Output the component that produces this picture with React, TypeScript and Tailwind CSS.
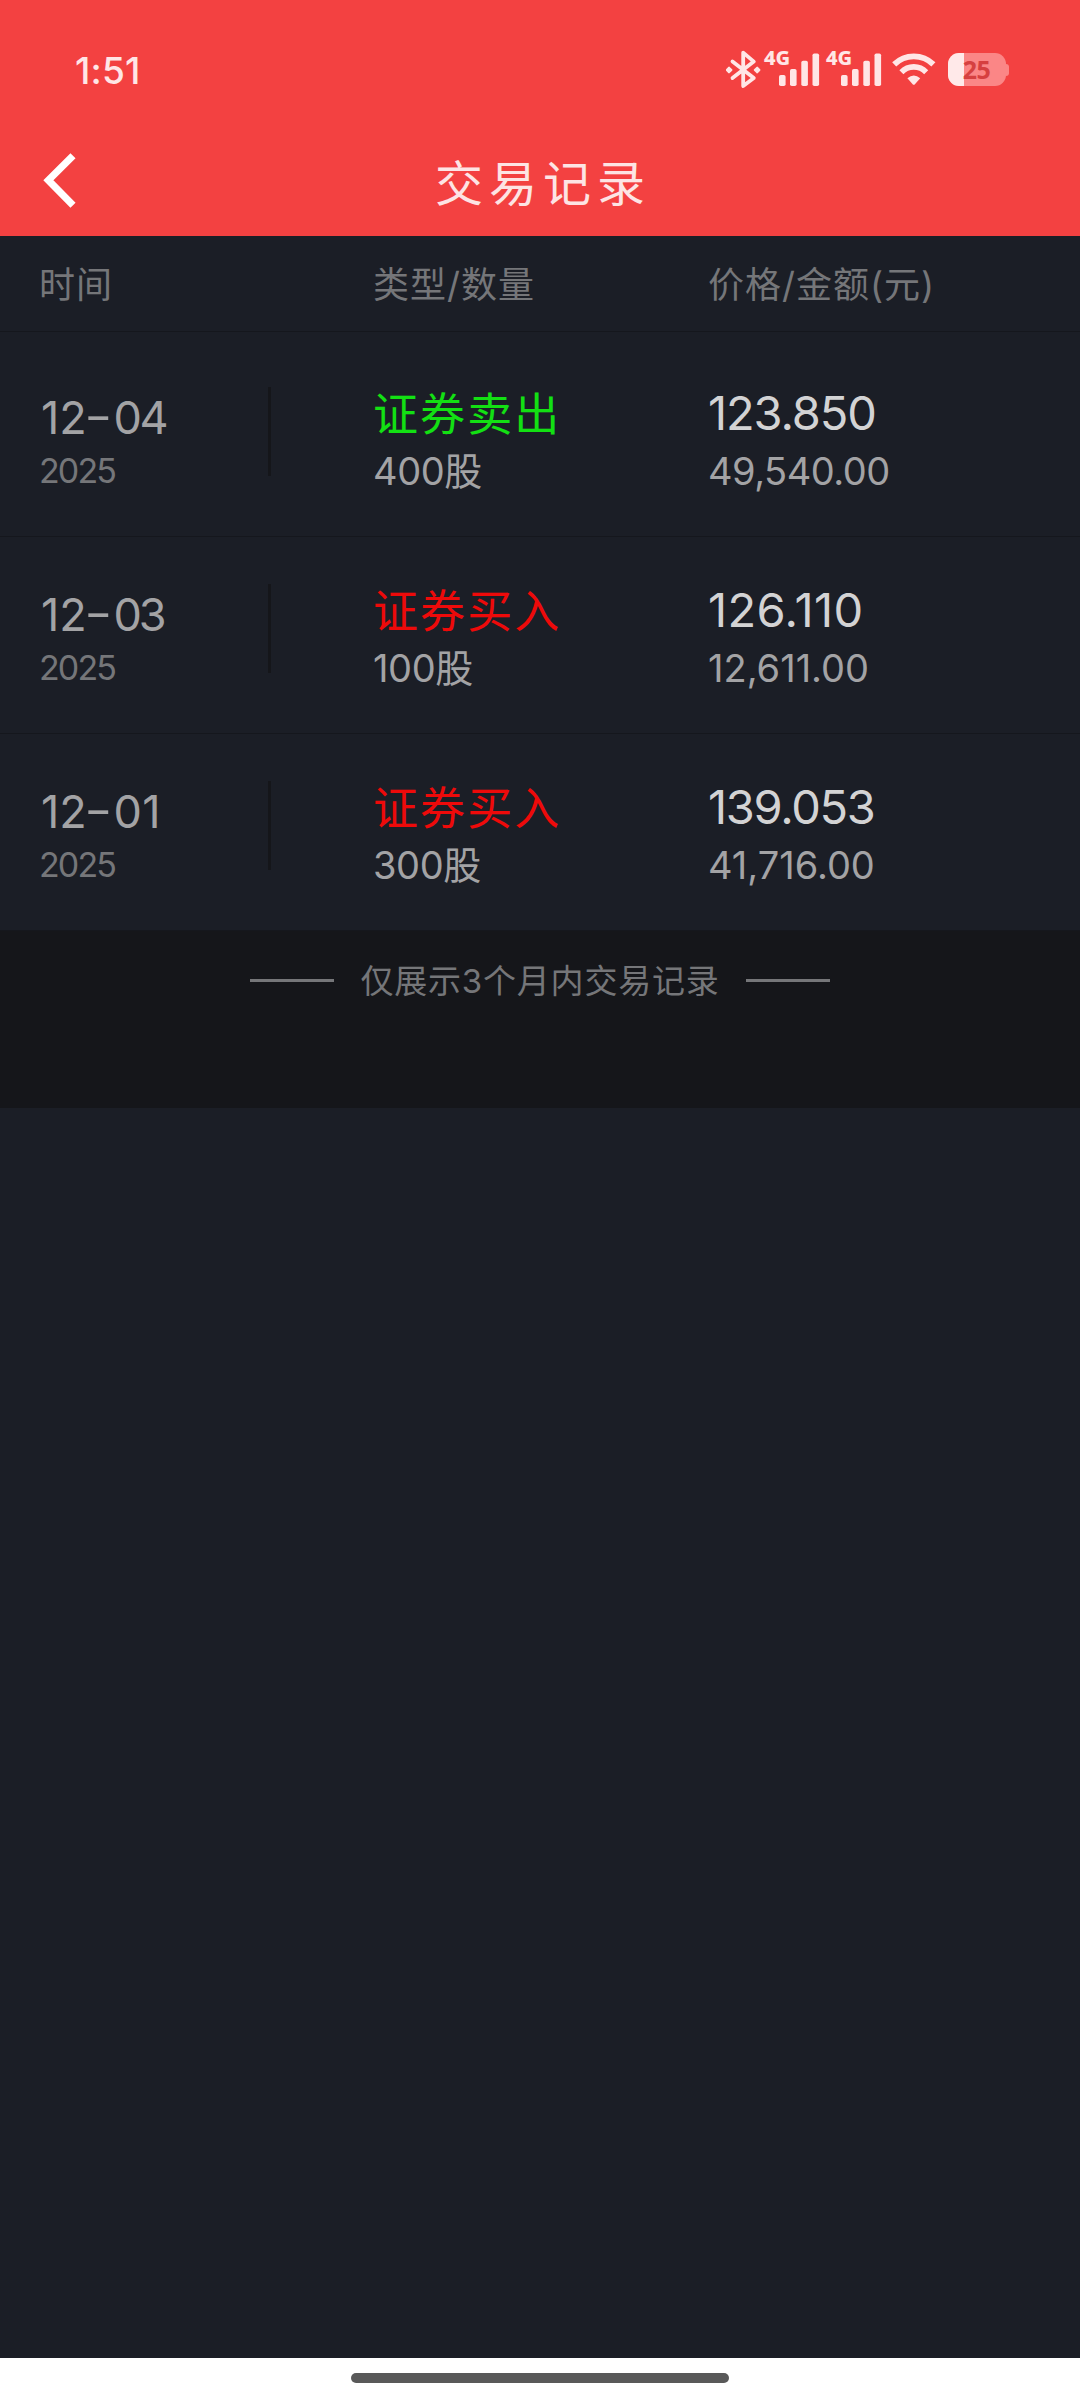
import React from "react";

type Trade = {
  month: string;
  day: string;
  dayClass: string;
  year: string;
  type: string;
  sell?: boolean;
  quantity: string;
  price: string;
  priceClass: string;
  amount: string;
  amountClass: string;
};

const trades: Trade[] = [
  {
    month: "12",
    day: "04",
    dayClass: "tracking-[-2.3px]",
    year: "2025",
    type: "证券卖出",
    sell: true,
    quantity: "400股",
    price: "123.850",
    priceClass: "tracking-[-1.1px]",
    amount: "49,540.00",
    amountClass: "tracking-[-0.5px]",
  },
  {
    month: "12",
    day: "03",
    dayClass: "tracking-[-3px]",
    year: "2025",
    type: "证券买入",
    quantity: "100股",
    price: "126.110",
    priceClass: "tracking-[0.4px]",
    amount: "12,611.00",
    amountClass: "tracking-normal",
  },
  {
    month: "12",
    day: "01",
    dayClass: "tracking-[0.5px]",
    year: "2025",
    type: "证券买入",
    quantity: "300股",
    price: "139.053",
    priceClass: "tracking-[-1.3px]",
    amount: "41,716.00",
    amountClass: "tracking-normal",
  },
];

function BluetoothIcon() {
  return (
    <svg width="36" height="40" viewBox="0 0 36 40" fill="none" className="text-[#ffe6e6]">
      <path
        d="M6.5 11.5 L27.8 28 L17.2 36 V2.6 L27.8 11.6 L6.5 28"
        stroke="currentColor"
        strokeWidth="3.8"
        strokeLinejoin="round"
        strokeLinecap="round"
      />
      <path
        d="M3 17.6 L5.4 20 L3 22.4 L0.8 20 Z M31.2 17.6 L33.4 20 L31.2 22.4 L28.8 20 Z"
        fill="currentColor"
        stroke="currentColor"
        strokeWidth="2"
        strokeLinejoin="round"
      />
    </svg>
  );
}

function Signal() {
  return (
    <div className="relative h-[40px] w-[55px]">
      <span className="absolute left-[-1px] top-[-1px] font-['Noto_Sans',sans-serif] text-[20px] font-extrabold leading-[18px] text-[#ffe6e6]">
        4G
      </span>
      <svg width="55" height="40" viewBox="0 0 55 40" fill="#ffe6e6" className="absolute left-0 top-0">
        <rect x="14" y="25" width="6.6" height="11" rx="1.8" />
        <rect x="25" y="19" width="6.6" height="17" rx="1.8" />
        <rect x="36.3" y="10.8" width="6.6" height="25.2" rx="1.8" />
        <rect x="47.5" y="3.5" width="6.6" height="32.5" rx="1.8" />
      </svg>
    </div>
  );
}

function WifiIcon() {
  return (
    <svg width="44" height="40" viewBox="0 0 44 40" fill="none">
      <path d="M2.2 14.4 A28 28 0 0 1 41.4 14.4" stroke="#ffe6e6" strokeWidth="5.8" />
      <path d="M9.4 22.2 A17.2 17.2 0 0 1 34.2 22.2" stroke="#ffe6e6" strokeWidth="5.6" />
      <path d="M15.4 28.2 Q21.8 22.8 28.2 28.2 L22.7 34.4 Q21.8 35.3 20.9 34.4 Z" fill="#ffe6e6" />
    </svg>
  );
}

function Battery() {
  return (
    <div className="flex items-center">
      <div className="relative flex h-[33px] w-[58px] items-center justify-center overflow-hidden rounded-[11px] bg-[#fb8686]">
        <div className="absolute left-0 top-0 h-full w-[16px] bg-[#ffe9e9]" />
        <span className="relative mr-px font-['Noto_Sans',sans-serif] text-[25px] font-bold leading-[33px] tracking-[-0.5px] text-[#d64040]">
          25
        </span>
      </div>
      <div className="h-[12px] w-[3px] rounded-r-[3px] bg-[#fb8686]" />
    </div>
  );
}

function StatusBar() {
  return (
    <div className="flex h-[128px] items-start justify-between pl-[75px] pr-[71px]">
      <span className="mt-[48px] text-[37px] font-medium leading-[46px] tracking-[0.2px] text-[#ffe6e6]">1:51</span>
      <div className="mt-[50px] flex items-center">
        <BluetoothIcon />
        <div className="ml-[3px]">
          <Signal />
        </div>
        <div className="ml-[7px]">
          <Signal />
        </div>
        <div className="ml-[10px]">
          <WifiIcon />
        </div>
        <div className="-mt-px ml-[12px]">
          <Battery />
        </div>
      </div>
    </div>
  );
}

function TitleBar() {
  return (
    <div className="relative flex h-[108px] items-start justify-center">
      <svg width="36" height="58" viewBox="0 0 36 58" fill="none" className="absolute left-[42px] top-[23px]">
        <path d="M31 4.8 L6.4 29.3 L31 54.2" stroke="#ffffff" strokeWidth="7.2" />
      </svg>
      <h1 className="mr-[-6px] mt-px text-[48px] font-normal leading-[110px] tracking-[6px] text-[#fde4e4]">交易记录</h1>
    </div>
  );
}

function TradeRow({ trade, first }: { trade: Trade; first: boolean }) {
  return (
    <div
      className={`grid grid-cols-[268px_106px_334px_1fr] border-b border-[#15171d] ${
        first ? "h-[205px] pt-[8px]" : "h-[197px]"
      }`}
    >
      <div className="pl-[40px] pt-[51px]">
        <div className="flex text-[45px] leading-[54px] text-[#a3a3a5]">
          <span className="ml-px">{trade.month}</span>
          <span className="relative -top-[2px] ml-[1px] mr-[5px] inline-block scale-x-[1.38]">-</span>
          <span className={trade.dayClass}>{trade.day}</span>
        </div>
        <div className="-ml-px mt-[3px] text-[34px] leading-[46px] tracking-[-1.9px] text-[#757679]">{trade.year}</div>
      </div>
      <div className="mt-[47px] h-[89px] w-[3px] bg-[#15161a]" />
      <div className="-ml-px pt-[48px]">
        <div
          className={`text-[45px] leading-[54px] tracking-[2.1px] ${trade.sell ? "text-[#13e013]" : "text-[#ee0a0a]"}`}
        >
          {trade.type}
        </div>
        <div className="mt-[6px] text-[38px] leading-[46px] tracking-[-0.4px] text-[#a3a3a5]">{trade.quantity}</div>
      </div>
      <div className="pt-[46px]">
        <div className={`text-[47px] leading-[54px] text-[#d3d3d4] ${trade.priceClass}`}>{trade.price}</div>
        <div className={`mt-[8px] text-[38px] leading-[46px] text-[#a3a3a5] ${trade.amountClass}`}>{trade.amount}</div>
      </div>
    </div>
  );
}

export default function App() {
  return (
    <div className="flex h-[2400px] w-[1080px] flex-col overflow-hidden bg-[#1b1e26] font-[Inter,'Noto_Sans_CJK_SC',sans-serif]">
      <header className="bg-[#f34141]">
        <StatusBar />
        <TitleBar />
      </header>

      <main className="flex-1">
        <div className="grid h-[96px] grid-cols-[373px_335px_1fr] border-b border-[#15171d] text-[36px] leading-[98px] tracking-[1px] text-[#757679]">
          <span className="pl-[39px]">时间</span>
          <span>类型/数量</span>
          <span>价格/金额(元)</span>
        </div>

        {trades.map((trade, i) => (
          <TradeRow key={trade.month + trade.day} trade={trade} first={i === 0} />
        ))}

        <div className="flex h-[177px] items-start justify-center bg-[#15161a]">
          <div className="flex h-[99px] items-center">
            <span className="h-[3px] w-[84px] bg-[#757679]" />
            <span className="mx-[26px] mt-[2px] text-[33px] leading-[99px] tracking-[0.8px] text-[#757679]">
              仅展示3个月内交易记录
            </span>
            <span className="h-[3px] w-[84px] bg-[#757679]" />
          </div>
        </div>
      </main>

      <footer className="flex h-[42px] items-start justify-center bg-white pt-[15px]">
        <div className="h-[10px] w-[378px] rounded-full bg-[#595959]" />
      </footer>
    </div>
  );
}
